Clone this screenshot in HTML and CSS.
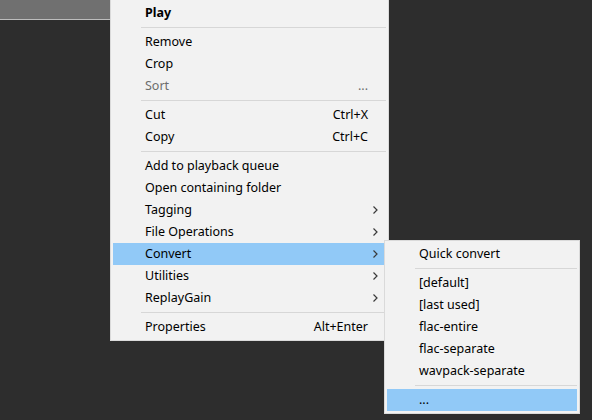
FILE: index.html
```html
<!DOCTYPE html>
<html>
<head>
<meta charset="utf-8">
<link rel="stylesheet" href="styles.css">
</head>
<body>
<div class="titlebar"></div>

<div class="menu main-menu">
  <div class="item bold"><span class="label">Play</span></div>
  <div class="sep"></div>
  <div class="item"><span class="label">Remove</span></div>
  <div class="item"><span class="label">Crop</span></div>
  <div class="item disabled"><span class="label">Sort</span><span class="shortcut">...</span></div>
  <div class="sep"></div>
  <div class="item"><span class="label">Cut</span><span class="shortcut">Ctrl+X</span></div>
  <div class="item"><span class="label">Copy</span><span class="shortcut">Ctrl+C</span></div>
  <div class="sep"></div>
  <div class="item"><span class="label">Add to playback queue</span></div>
  <div class="item"><span class="label">Open containing folder</span></div>
  <div class="item sub"><span class="label">Tagging</span><svg class="arrow" width="5" height="8" viewBox="0 0 5 8"><path d="M0.5 0.5 L4 4 L0.5 7.5" fill="none" stroke="#3a3a3a" stroke-width="1.2"/></svg></div>
  <div class="item sub"><span class="label">File Operations</span><svg class="arrow" width="5" height="8" viewBox="0 0 5 8"><path d="M0.5 0.5 L4 4 L0.5 7.5" fill="none" stroke="#3a3a3a" stroke-width="1.2"/></svg></div>
  <div class="item sub active"><span class="label">Convert</span><svg class="arrow" width="5" height="8" viewBox="0 0 5 8"><path d="M0.5 0.5 L4 4 L0.5 7.5" fill="none" stroke="#3a3a3a" stroke-width="1.2"/></svg></div>
  <div class="item sub"><span class="label">Utilities</span><svg class="arrow" width="5" height="8" viewBox="0 0 5 8"><path d="M0.5 0.5 L4 4 L0.5 7.5" fill="none" stroke="#3a3a3a" stroke-width="1.2"/></svg></div>
  <div class="item sub"><span class="label">ReplayGain</span><svg class="arrow" width="5" height="8" viewBox="0 0 5 8"><path d="M0.5 0.5 L4 4 L0.5 7.5" fill="none" stroke="#3a3a3a" stroke-width="1.2"/></svg></div>
  <div class="sep"></div>
  <div class="item"><span class="label">Properties</span><span class="shortcut">Alt+Enter</span></div>
</div>

<div class="menu sub-menu">
  <div class="item"><span class="label">Quick convert</span></div>
  <div class="sep"></div>
  <div class="item"><span class="label">[default]</span></div>
  <div class="item"><span class="label">[last used]</span></div>
  <div class="item"><span class="label">flac-entire</span></div>
  <div class="item"><span class="label">flac-separate</span></div>
  <div class="item"><span class="label">wavpack-separate</span></div>
  <div class="sep"></div>
  <div class="item active"><span class="label">...</span></div>
</div>
</body>
</html>
```

FILE: styles.css
```css
html, body {
  margin: 0;
  padding: 0;
}
body {
  width: 592px;
  height: 420px;
  background: #2d2d2d;
  position: relative;
  overflow: hidden;
  font-family: "Noto Sans", "Open Sans", sans-serif;
  font-size: 12.5px;
  color: #000;
}
.titlebar {
  width: 110px;
  height: 19px;
  background: #707070;
  border-bottom: 1px solid #bdbdbd;
}
.menu {
  position: absolute;
  box-sizing: border-box;
  background: #f2f2f2;
  border: 1px solid #dadada;
  padding: 2px;
  display: flex;
  flex-direction: column;
}
.main-menu {
  left: 110px;
  top: -1px;
  width: 279px;
}
.sub-menu {
  left: 384px;
  top: 240px;
  width: 196px;
}
.item {
  box-sizing: border-box;
  height: 22px;
  display: flex;
  align-items: center;
  padding: 0 18px 2px 32px;
  white-space: nowrap;
}
.item .label {
  flex: 1;
}
.item.sub {
  padding-right: 8px;
}
.item.sub .arrow {
  margin-top: 2px;
}
.item.active {
  background: #91c9f7;
}
.item.bold {
  font-weight: bold;
}
.item.disabled {
  color: #6d6d6d;
}
.shortcut {
  text-align: right;
}
.sep {
  height: 1px;
  margin: 3px 0 3px 28px;
  background: #d7d7d7;
}
.arrow {
  display: block;
}
```
